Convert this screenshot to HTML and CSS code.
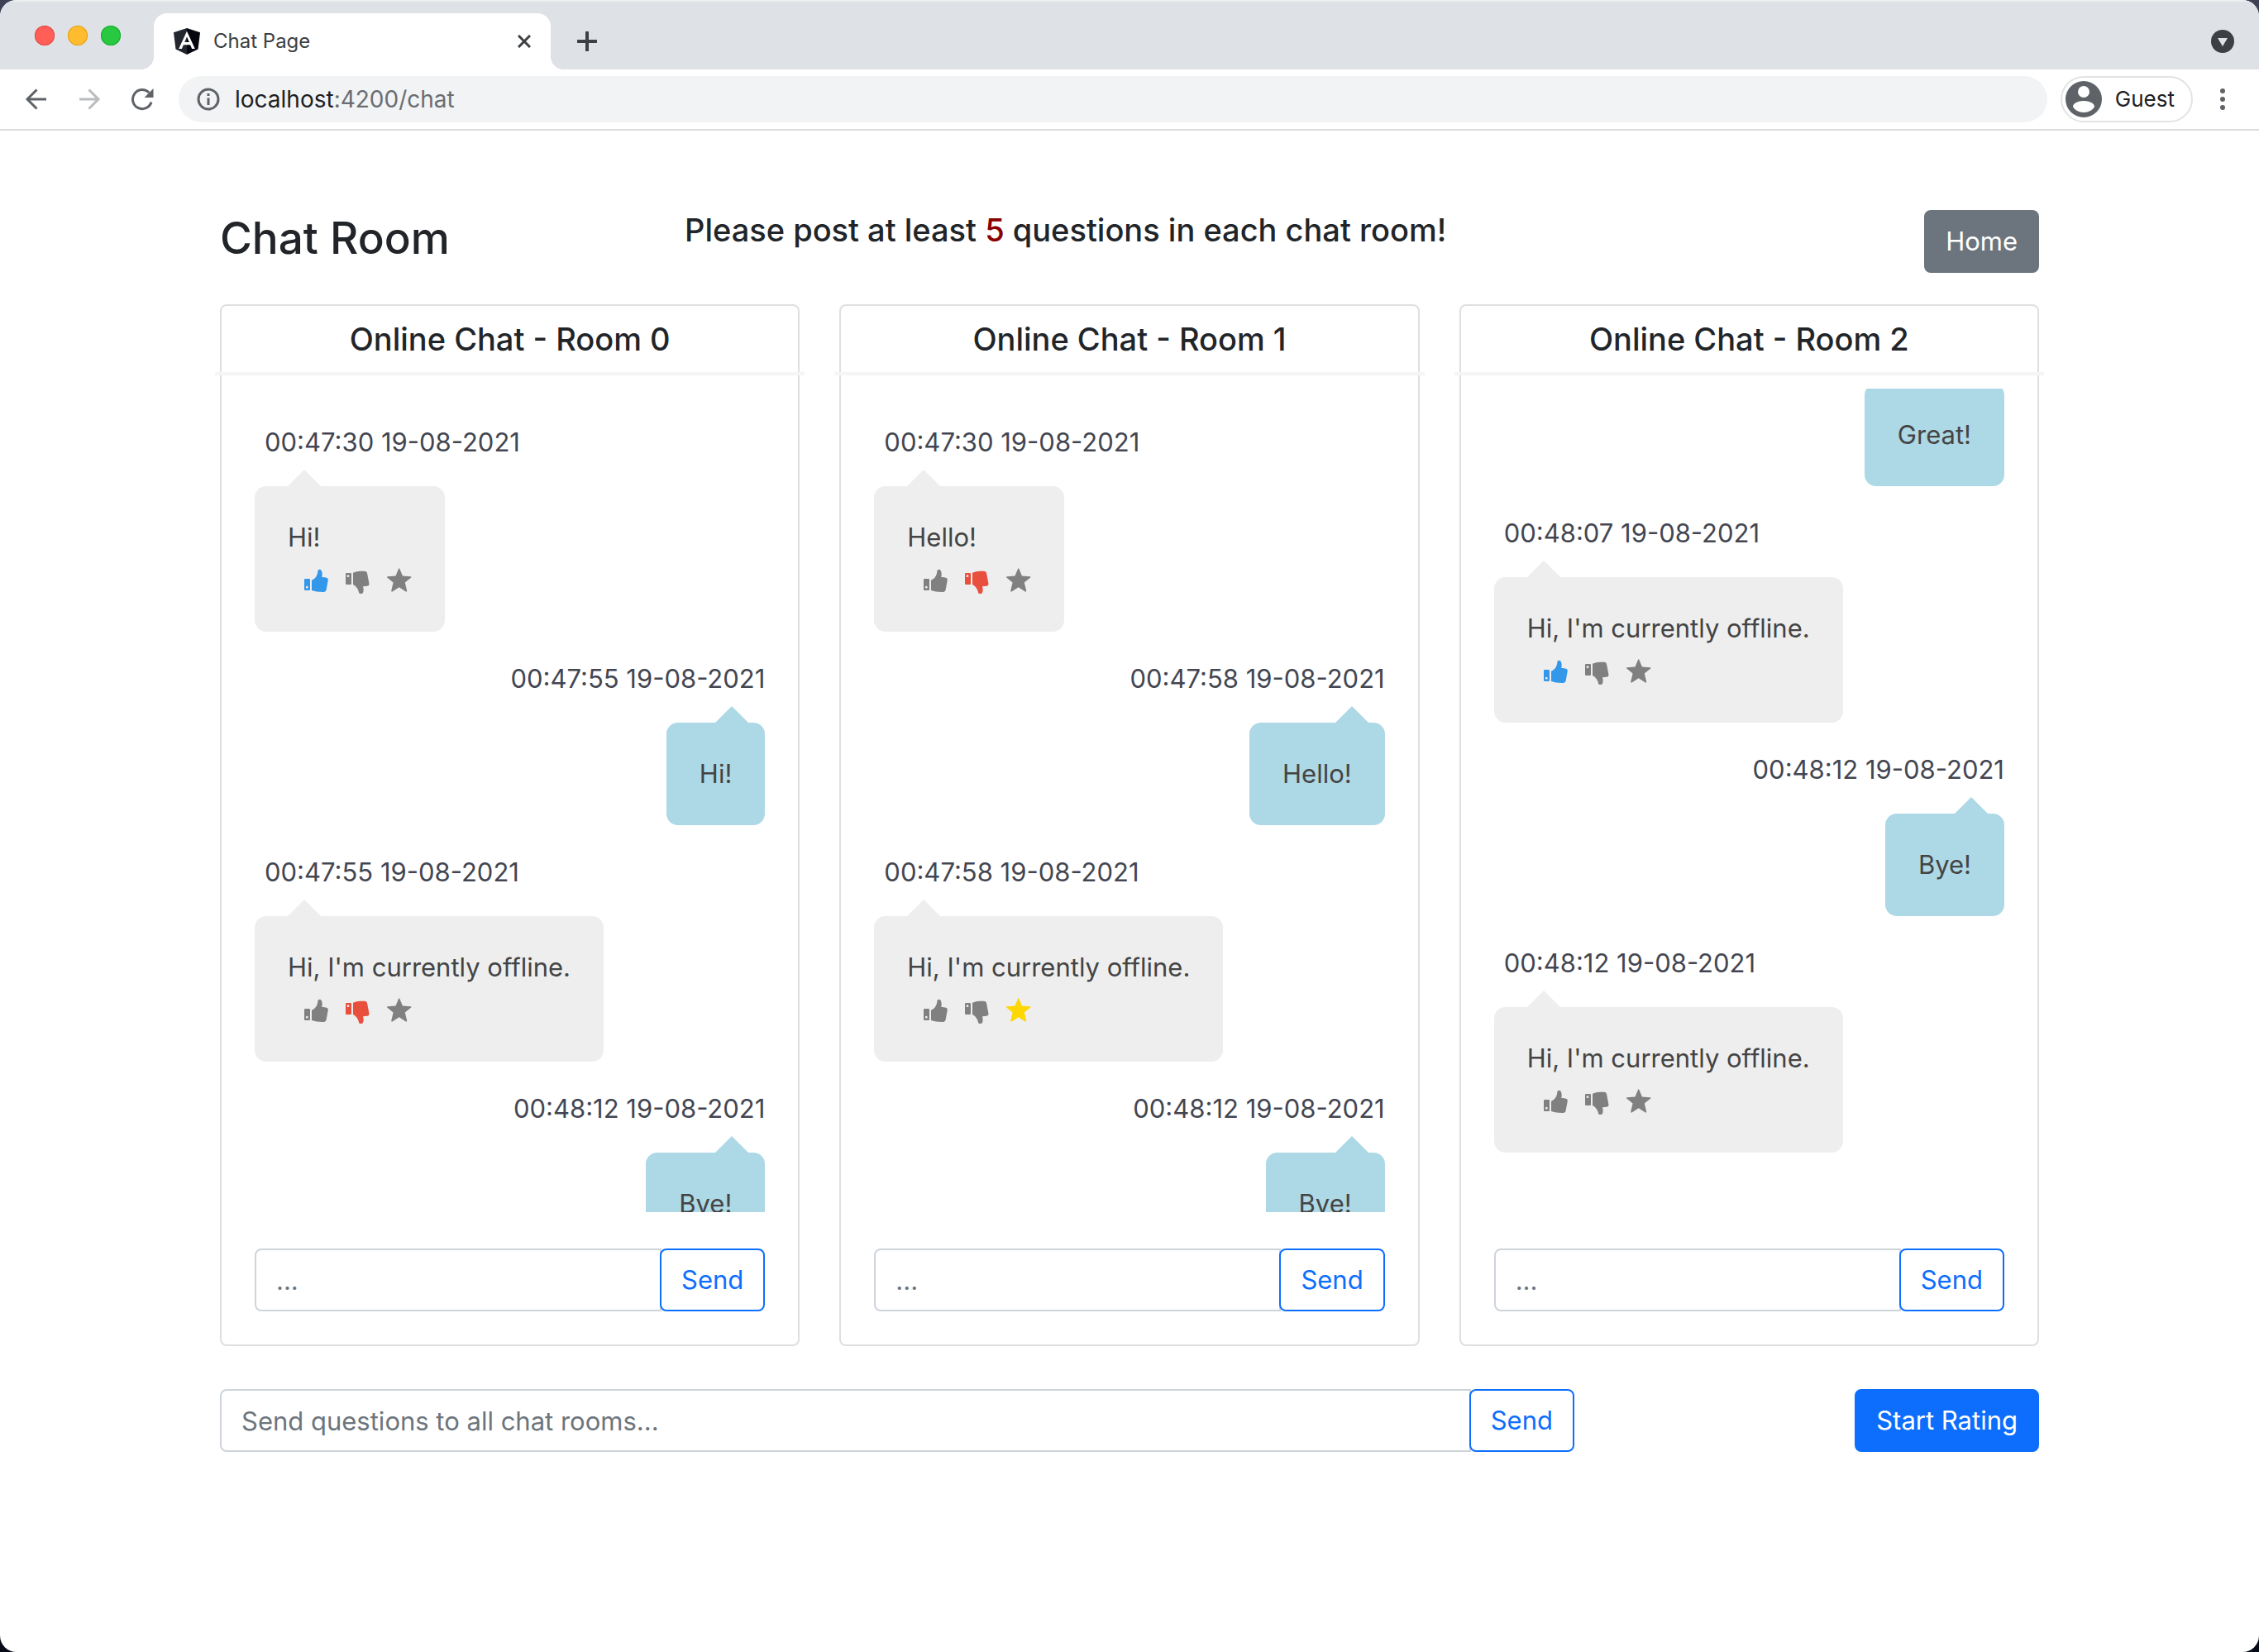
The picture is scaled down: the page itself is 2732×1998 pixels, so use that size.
FILE: index.html
```html
<!DOCTYPE html>
<html lang="en">
<head>
<meta charset="utf-8">
<meta name="viewport" content="width=device-width, initial-scale=1">
<title>Chat Page</title>
<link rel="stylesheet" href="styles.css">
</head>
<body>
<svg class="sprite" aria-hidden="true">
  <symbol id="up" viewBox="0 0 30 32">
    <path fill-rule="evenodd" d="M1 14H6Q7 14 7 15V27Q7 28 6 28H1Q0 28 0 27V15Q0 14 1 14ZM3.3 22.8a1.4 1.4 0 1 0 .01 0Z"/>
    <path d="M9 15.7C11 14.800 12.600 13.800 13.700 12.300C15.500 9.800 16.200 7.200 16.400 4.700C16.600 2.200 20 2 21 4.700C22 7.500 21.800 10 21.200 12C23.500 12.200 25.500 12.200 27 12.700C28.600 13.300 29 14.500 28.700 16L26.600 27.500C26.200 29.400 24.500 30 22 30C17 30 12.500 29.200 9 28Z"/>
  </symbol>
  <symbol id="down" viewBox="0 0 30 32">
    <path fill-rule="evenodd" d="M1 7H6Q7 7 7 8V20Q7 21 6 21H1Q0 21 0 20V8Q0 7 1 7ZM3 9.300a1.400 1.400 0 1 0 .01 0Z"/>
    <path d="M9 6.700C12 5.500 15 4.800 18 4.700L22.500 4.700C25 4.800 25.800 5.800 26.200 8L28.400 19.500C28.700 21.500 27.800 22.500 26 22.700C24.500 23 22.800 23 21 23.300C21.500 25 21.800 27 21.500 29C21 33 17 33.300 16 30.500C15.500 28.500 15 27 14 25.500C12.500 23 11 22 9 21Z"/>
  </symbol>
  <symbol id="star" viewBox="0 0 30 32">
    <path d="M14 2Q14.700 .7 15.400 2L18.900 10.600L28.600 11.300Q30 11.700 28.900 12.800L21.800 18.600L24.200 28.500Q24.200 30 22.800 29.500L14.700 24.200L6.600 29.500Q5.200 30 5.200 28.500L7.600 18.600L.5 12.800Q-.5 11.700 .8 11.300L10.500 10.600Z"/>
  </symbol>
</svg>

<div class="window">
  <header class="chrome">
    <div class="tabstrip">
      <div class="lights"><span class="light red"></span><span class="light amber"></span><span class="light green"></span></div>
      <div class="tab">
        <svg class="favicon" viewBox="0 0 32 32" aria-hidden="true"><path fill="#23252f" d="M16 0 0 5.300 2.500 25.500 16 32Z"/><path fill="#05060f" d="M16 0 32 5.300 29.500 25.500 16 32Z"/><path fill="#fff" fill-rule="evenodd" d="M16 3.800 6.200 25H9.900L11.900 20.200H20.100L22.100 25H25.800ZM16 10.500 18.800 17H13.200Z"/></svg>
        <span class="tab-title">Chat Page</span>
        <button class="icon-btn" aria-label="Close tab"><svg width="16" height="16" viewBox="0 0 16 16"><path d="M1 1 15 15M15 1 1 15" stroke="#3c4043" stroke-width="3"/></svg></button>
      </div>
      <button class="icon-btn new-tab" aria-label="New tab"><svg width="24" height="24" viewBox="0 0 24 24"><path d="M12 1V23M1 12H23" stroke="#3c4043" stroke-width="4" stroke-linecap="round"/></svg></button>
      <button class="icon-btn tab-search" aria-label="Search tabs"><svg width="28" height="28" viewBox="0 0 28 28"><circle cx="14" cy="14" r="14" fill="#3c4043"/><path d="M8 10H20L14 20Z" fill="#dee1e6"/></svg></button>
    </div>
    <div class="toolbar">
      <div class="nav">
        <button class="icon-btn" aria-label="Back"><svg width="28" height="28" viewBox="0 0 28 28"><path d="M26 14H3M14.500 2.500 3 14 14.500 25.500" fill="none" stroke="#5f6368" stroke-width="3"/></svg></button>
        <button class="icon-btn" aria-label="Forward"><svg width="28" height="28" viewBox="0 0 28 28"><path d="M2 14H25M13.500 2.500 25 14 13.500 25.500" fill="none" stroke="#babcbe" stroke-width="3"/></svg></button>
        <button class="icon-btn" aria-label="Reload"><svg width="28" height="28" viewBox="0 0 28 28"><path d="M25 17.500A11.500 11.500 0 1 1 22.200 6" fill="none" stroke="#5f6368" stroke-width="3"/><path d="M27.500 1V12H16.500Z" fill="#5f6368"/></svg></button>
      </div>
      <div class="omnibox">
        <svg width="28" height="28" viewBox="0 0 28 28" aria-hidden="true"><circle cx="14" cy="14" r="12" fill="none" stroke="#5f6368" stroke-width="3"/><path d="M14 7V10M14 12.500V21" stroke="#5f6368" stroke-width="3"/></svg>
        <span class="url">localhost<span class="url-rest">:4200/chat</span></span>
      </div>
      <button class="profile"><svg width="44" height="44" viewBox="0 0 44 44" aria-hidden="true"><circle cx="22" cy="22" r="22" fill="#5f6368"/><circle cx="22" cy="13" r="7" fill="#fff"/><path d="M22 24C29 24 35 27 35 31C33 35 28 38 22 38S11 35 9 31C9 27 15 24 22 24Z" fill="#fff"/></svg>Guest</button>
      <button class="icon-btn" aria-label="Menu"><svg width="8" height="28" viewBox="0 0 8 28"><g fill="#5f6368"><circle cx="4" cy="4" r="3"/><circle cx="4" cy="14" r="3"/><circle cx="4" cy="24" r="3"/></g></svg></button>
    </div>
  </header>

  <main class="page">
    <div class="intro">
      <h1 class="title">Chat Room</h1>
      <h2 class="task">Please post at least <span class="count">5</span> questions in each chat room!</h2>
      <button class="btn btn-secondary">Home</button>
    </div>

    <div class="rooms">
      <section class="card">
        <h2 class="card-title">Online Chat - Room 0</h2>
        <div class="messages">
          <time class="stamp">00:47:30 19-08-2021</time>
          <div class="bubble">Hi!
            <div class="rate"><button class="icon-btn like" aria-label="Like"><svg class="icon"><use href="#up"/></svg></button><button class="icon-btn" aria-label="Dislike"><svg class="icon"><use href="#down"/></svg></button><button class="icon-btn" aria-label="Star"><svg class="icon"><use href="#star"/></svg></button></div>
          </div>
          <time class="stamp own">00:47:55 19-08-2021</time>
          <div class="bubble own">Hi!</div>
          <time class="stamp">00:47:55 19-08-2021</time>
          <div class="bubble">Hi, I'm currently offline.
            <div class="rate"><button class="icon-btn" aria-label="Like"><svg class="icon"><use href="#up"/></svg></button><button class="icon-btn dislike" aria-label="Dislike"><svg class="icon"><use href="#down"/></svg></button><button class="icon-btn" aria-label="Star"><svg class="icon"><use href="#star"/></svg></button></div>
          </div>
          <time class="stamp own">00:48:12 19-08-2021</time>
          <div class="bubble own">Bye!</div>
        </div>
        <form class="send-group"><input class="field" type="text" placeholder="..." aria-label="Message to room 0"><button class="btn btn-outline" type="button">Send</button></form>
      </section>

      <section class="card">
        <h2 class="card-title">Online Chat - Room 1</h2>
        <div class="messages">
          <time class="stamp">00:47:30 19-08-2021</time>
          <div class="bubble">Hello!
            <div class="rate"><button class="icon-btn" aria-label="Like"><svg class="icon"><use href="#up"/></svg></button><button class="icon-btn dislike" aria-label="Dislike"><svg class="icon"><use href="#down"/></svg></button><button class="icon-btn" aria-label="Star"><svg class="icon"><use href="#star"/></svg></button></div>
          </div>
          <time class="stamp own">00:47:58 19-08-2021</time>
          <div class="bubble own">Hello!</div>
          <time class="stamp">00:47:58 19-08-2021</time>
          <div class="bubble">Hi, I'm currently offline.
            <div class="rate"><button class="icon-btn" aria-label="Like"><svg class="icon"><use href="#up"/></svg></button><button class="icon-btn" aria-label="Dislike"><svg class="icon"><use href="#down"/></svg></button><button class="icon-btn starred" aria-label="Star"><svg class="icon"><use href="#star"/></svg></button></div>
          </div>
          <time class="stamp own">00:48:12 19-08-2021</time>
          <div class="bubble own">Bye!</div>
        </div>
        <form class="send-group"><input class="field" type="text" placeholder="..." aria-label="Message to room 1"><button class="btn btn-outline" type="button">Send</button></form>
      </section>

      <section class="card">
        <h2 class="card-title">Online Chat - Room 2</h2>
        <div class="messages at-end">
          <div class="bubble own">Great!</div>
          <time class="stamp">00:48:07 19-08-2021</time>
          <div class="bubble">Hi, I'm currently offline.
            <div class="rate"><button class="icon-btn like" aria-label="Like"><svg class="icon"><use href="#up"/></svg></button><button class="icon-btn" aria-label="Dislike"><svg class="icon"><use href="#down"/></svg></button><button class="icon-btn" aria-label="Star"><svg class="icon"><use href="#star"/></svg></button></div>
          </div>
          <time class="stamp own">00:48:12 19-08-2021</time>
          <div class="bubble own">Bye!</div>
          <time class="stamp">00:48:12 19-08-2021</time>
          <div class="bubble">Hi, I'm currently offline.
            <div class="rate"><button class="icon-btn" aria-label="Like"><svg class="icon"><use href="#up"/></svg></button><button class="icon-btn" aria-label="Dislike"><svg class="icon"><use href="#down"/></svg></button><button class="icon-btn" aria-label="Star"><svg class="icon"><use href="#star"/></svg></button></div>
          </div>
        </div>
        <form class="send-group"><input class="field" type="text" placeholder="..." aria-label="Message to room 2"><button class="btn btn-outline" type="button">Send</button></form>
      </section>
    </div>

    <div class="footer">
      <form class="send-group"><input class="field" type="text" placeholder="Send questions to all chat rooms..." aria-label="Message to all rooms"><button class="btn btn-outline" type="button">Send</button></form>
      <button class="btn btn-primary">Start Rating</button>
    </div>
  </main>
</div>
</body>
</html>
```

FILE: styles.css
```css
* { box-sizing: border-box; }

body {
  margin: 0;
  background: linear-gradient(#3f4254, #070b18);
  color: #212529;
  font-family: Inter, "Liberation Sans", sans-serif;
  font-size: 31px;
  line-height: 44px;
}

h1, h2 { margin: 0; font-weight: 500; }
button, input { font: inherit; }
.sprite { position: absolute; width: 0; height: 0; }

.window {
  min-height: 100vh;
  overflow: hidden;
  background: #fff;
  border-radius: 20px;
}

.icon-btn {
  display: flex;
  padding: 0;
  border: 0;
  background: none;
  color: gray;
}

/* Browser frame */
.tabstrip {
  display: flex;
  align-items: center;
  height: 84px;
  padding: 16px 30px 0 42px;
  background: #dee1e6;
  box-shadow: inset 0 2px #eceef0;
}
.lights { display: flex; gap: 16px; width: 144px; height: 50px; }
.light { width: 24px; height: 24px; margin-top: 6px; border-radius: 50%; }
.red { background: #ff5f57; box-shadow: inset 0 0 0 1px #e2463f; }
.amber { background: #febc2e; box-shadow: inset 0 0 0 1px #e1a116; }
.green { background: #28c840; box-shadow: inset 0 0 0 1px #12ac28; }
.tab {
  position: relative;
  display: flex;
  align-items: center;
  gap: 16px;
  width: 480px;
  height: 68px;
  padding: 0 24px;
  border-radius: 16px 16px 0 0;
  background: #fff;
}
.tab::before, .tab::after {
  content: "";
  position: absolute;
  bottom: 0;
  width: 16px;
  height: 16px;
}
.tab::before { right: 100%; background: radial-gradient(circle at 0 0, transparent 16px, #fff 16px); }
.tab::after { left: 100%; background: radial-gradient(circle at 100% 0, transparent 16px, #fff 16px); }
.favicon { width: 32px; height: 32px; }
.tab-title { flex: 1; color: #3c4043; font-size: 24px; }
.new-tab { margin-left: 32px; }
.tab-search { margin-left: auto; }

.toolbar {
  display: flex;
  align-items: center;
  gap: 16px;
  height: 74px;
  padding: 0 40px 0 30px;
  border-bottom: 2px solid #dadce0;
}
.nav { display: flex; gap: 36px; width: 170px; }
.omnibox {
  flex: 1;
  display: flex;
  align-items: center;
  gap: 18px;
  height: 56px;
  padding: 0 22px;
  border-radius: 28px;
  background: #f1f3f4;
}
.url { color: #202124; font-size: 28px; }
.url-rest { color: #6a6d71; }
.profile {
  display: flex;
  align-items: center;
  gap: 16px;
  height: 56px;
  margin-right: 16px;
  padding: 0 20px 0 4px;
  border: 2px solid #e2e3e5;
  border-radius: 28px;
  background: #fff;
  color: #202124;
  font-size: 26px;
}

/* Page */
.page {
  max-width: 2248px;
  margin: 0 auto;
  padding: 96px 24px;
}
.intro {
  display: grid;
  grid-template-columns: calc(25% - 36px) 1fr auto;
  column-gap: 48px;
  align-items: start;
  margin-bottom: 38px;
}
.title { font-size: 53px; line-height: 68px; }
.task { font-size: 38px; line-height: 48px; }
.count { color: darkred; }

.rooms {
  display: grid;
  grid-template-columns: repeat(3, 1fr);
  gap: 48px;
}
.card {
  min-width: 0;
  padding: 0 40px 40px;
  border: 2px solid #dfdfdf;
  border-radius: 8px;
}
.card-title {
  margin: 0 -48px 16px;
  border-bottom: 4px solid #f5f5f5;
  font-size: 38px;
  line-height: 80px;
  text-align: center;
}
.messages {
  display: flex;
  flex-direction: column;
  align-items: flex-start;
  height: 996px;
  margin-bottom: 44px;
  padding-top: 8px;
  overflow: hidden;
}
.messages > * { flex-shrink: 0; }
.at-end { justify-content: flex-end; padding: 0 0 72px; }

.stamp {
  margin: 34px 12px 30px;
  color: #434651;
  line-height: 46px;
}
.stamp.own { align-self: flex-end; margin-right: 0; }

.bubble {
  position: relative;
  padding: 40px;
  border-radius: 14px;
  background: #eee;
  color: #444;
}
.bubble.own { align-self: flex-end; background: lightblue; }
.bubble::before {
  content: "";
  position: absolute;
  bottom: 100%;
  left: 40px;
  border: 20px solid transparent;
  border-top: 0;
  border-bottom-color: #eee;
}
.bubble.own::before { left: auto; right: 20px; border-bottom-color: lightblue; }

.rate { display: flex; gap: 20px; padding: 14px 0 6px 20px; }
.icon { width: 30px; height: 32px; overflow: visible; fill: currentColor; }
.like { color: #3498ea; }
.dislike { color: #e94f3d; }
.starred { color: gold; }

/* Controls */
.btn {
  height: 76px;
  padding: 0 24px;
  border: 2px solid;
  border-radius: 8px;
  white-space: nowrap;
}
.btn-secondary { border-color: #6c757d; background: #6c757d; color: #fff; }
.btn-primary { border-color: #0d6efd; background: #0d6efd; color: #fff; }
.btn-outline { margin-left: -2px; border-color: #0d6efd; background: #fff; color: #0d6efd; }
.send-group { display: flex; }
.field {
  flex: 1;
  min-width: 0;
  height: 76px;
  padding: 0 24px;
  border: 2px solid #ced4da;
  border-radius: 8px 0 0 8px;
  background: #fff;
}
.field::placeholder { color: #6c757d; opacity: 1; }

.footer {
  display: grid;
  grid-template-columns: calc(75% - 12px) auto;
  justify-content: space-between;
  margin-top: 52px;
}
```
